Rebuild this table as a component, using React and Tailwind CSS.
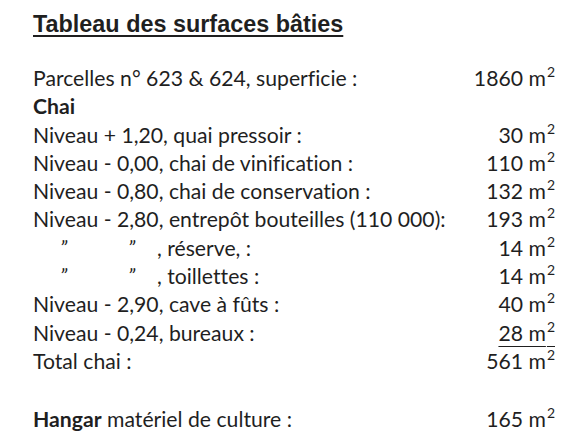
import React from "react";

const Area = ({ value, underline }) => (
  <span className={underline ? "underline underline-offset-[5px] decoration-1" : ""}>
    {value} m<sup className="text-[14px] ml-[1px] -top-[9px]">2</sup>
  </span>
);

const Ditto = ({ label }) => (
  <span className="flex">
    <span className="w-[27px]" />
    <span className="italic w-[68px]">”</span>
    <span className="italic w-[29px]">”</span>
    <span>{label}</span>
  </span>
);

const rows = [
  { label: "Niveau + 1,20, quai pressoir :", value: "30" },
  { label: "Niveau - 0,00, chai de vinification :", value: "110" },
  { label: "Niveau - 0,80, chai de conservation :", value: "132" },
  { label: "Niveau - 2,80, entrepôt bouteilles (110 000):", value: "193" },
  { ditto: ", réserve, :", value: "14" },
  { ditto: ", toillettes :", value: "14" },
  { label: "Niveau - 2,90, cave à fûts :", value: "40" },
  { label: "Niveau - 0,24, bureaux :", value: "28", underline: true },
  { label: "Total chai :", value: "561" },
];

const App = () => {
  return (
    <div className="w-[584px] h-[438px] bg-white text-[#1f1f1f] pl-[33px] pr-[29px] pt-[10px] overflow-hidden">
      <h1 className="font-['Liberation_Sans',Arial,sans-serif] font-bold text-[23.4px] leading-[28px] underline underline-offset-[3px] decoration-2">
        Tableau des surfaces bâties
      </h1>

      <div className="mt-[26px] font-['Lato',sans-serif] text-[21.2px] leading-[28.3px] [font-variant-ligatures:none]">
        <div className="flex justify-between">
          <span>Parcelles n° 623 &amp; 624, superficie :</span>
          <Area value="1860" />
        </div>
        <div className="font-bold">Chai</div>
        {rows.map((r, i) => (
          <div key={i} className="flex justify-between">
            {r.ditto ? <Ditto label={r.ditto} /> : <span>{r.label}</span>}
            <Area value={r.value} underline={r.underline} />
          </div>
        ))}
        <div className="flex justify-between mt-[30px]">
          <span>
            <span className="font-bold">Hangar</span> matériel de culture :
          </span>
          <Area value="165" />
        </div>
      </div>
    </div>
  );
};

export default App;
